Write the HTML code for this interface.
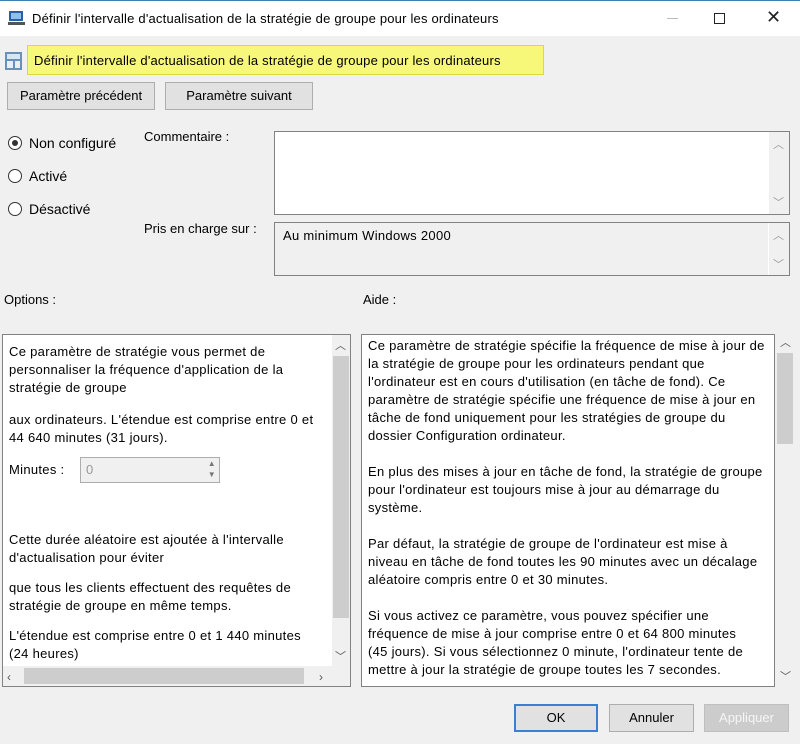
<!DOCTYPE html>
<html><head><meta charset="utf-8"><style>
*{box-sizing:border-box}
body{margin:0;width:800px;height:744px;background:#f0f0f0;font-family:"Liberation Sans",sans-serif;font-size:12.5px;color:#000;position:relative;overflow:hidden}
.a{position:absolute}
.title{left:0;top:0;width:800px;height:36px;background:#fff;border-top:1px solid #3c7fb1}
.btn{position:absolute;background:#e1e1e1;border:1px solid #adadad;text-align:center;line-height:26px;font-size:13px}
.radio{position:absolute;width:14px;height:14px;border:1px solid #333;border-radius:50%;background:#fff}
.box{position:absolute;background:#fff;border:1px solid #828282}
.sb{position:absolute;color:#999;font-size:11px}
.t{font-size:13px;letter-spacing:0.3px}
p{margin:0}
</style></head><body>
<div class="a title">
 <svg class="a" style="left:8px;top:9px" width="18" height="16"><rect x="1" y="1" width="14" height="10" fill="#2a5ea8"/><rect x="3" y="3" width="10" height="6" fill="#8fc0ea"/><rect x="0" y="12" width="17" height="3" fill="#555"/></svg>
 <div class="a" style="left:32px;top:10px;font-size:13px;letter-spacing:0.2px">Définir l'intervalle d'actualisation de la stratégie de groupe pour les ordinateurs</div>
 <div class="a" style="left:667px;top:17px;width:11px;height:1px;background:#bbb"></div>
 <div class="a" style="left:714px;top:12px;width:11px;height:11px;border:1px solid #222"></div>
 <div class="a" style="left:766px;top:6px;font-size:18px;color:#222">✕</div>
</div>
<svg class="a" style="left:5px;top:51px" width="18" height="20"><rect x="0" y="1" width="17" height="18" fill="#6a8fb8"/><rect x="2" y="3" width="13" height="5" fill="#d8e6f3"/><rect x="2" y="10" width="6" height="7" fill="#e8eef5"/><rect x="10" y="10" width="5" height="7" fill="#e8eef5"/></svg>
<div class="a" style="left:27px;top:45px;width:517px;height:30px;background:#f7f77a;border:1px solid #e0d640;padding:7px 0 0 6px;font-size:13px;letter-spacing:0.2px">Définir l'intervalle d'actualisation de la stratégie de groupe pour les ordinateurs</div>
<div class="btn" style="left:7px;top:82px;width:148px;height:28px">Paramètre précédent</div>
<div class="btn" style="left:165px;top:82px;width:148px;height:28px">Paramètre suivant</div>

<div class="radio" style="left:8px;top:136px"><div class="a" style="left:3px;top:3px;width:6px;height:6px;border-radius:50%;background:#333"></div></div>
<div class="a" style="left:29px;top:135px;font-size:14px">Non configuré</div>
<div class="radio" style="left:8px;top:169px"></div>
<div class="a" style="left:29px;top:168px;font-size:14px">Activé</div>
<div class="radio" style="left:8px;top:202px"></div>
<div class="a" style="left:29px;top:201px;font-size:14px">Désactivé</div>

<div class="a" style="left:144px;top:129px;font-size:13px">Commentaire :</div>
<div class="box" style="left:274px;top:131px;width:516px;height:84px"><div class="a" style="right:0;top:0;width:20px;height:82px;background:#f0f0f0"></div><div class="sb" style="right:5px;top:4px">︿</div><div class="sb" style="right:5px;top:62px">﹀</div></div>
<div class="a" style="left:144px;top:221px;font-size:13px">Pris en charge sur :</div>
<div class="box" style="left:274px;top:222px;width:516px;height:54px;background:#f0f0f0"><div class="a" style="left:8px;top:5px;font-size:13px;letter-spacing:0.3px">Au minimum Windows 2000</div><div class="a" style="right:20px;top:0;width:1px;height:52px;background:#fff"></div><div class="sb" style="right:5px;top:4px">︿</div><div class="sb" style="right:5px;top:33px">﹀</div></div>

<div class="a" style="left:4px;top:292px;font-size:13px">Options :</div>
<div class="a" style="left:363px;top:292px;font-size:13px">Aide :</div>

<div class="box t" style="left:2px;top:334px;width:349px;height:353px;line-height:18px">
 <div class="a" style="left:6px;top:8px;width:325px">
  <p>Ce paramètre de stratégie vous permet de<br>personnaliser la fréquence d'application de la<br>stratégie de groupe</p>
  <p style="margin-top:14px">aux ordinateurs. L'étendue est comprise entre 0 et<br>44 640 minutes (31 jours).</p>
  <div style="margin-top:10px;position:relative;height:26px"><span style="position:absolute;top:4px">Minutes :</span><div class="a" style="left:71px;top:0;width:140px;height:26px;border:1px solid #adadad;background:#f0f0f0;color:#999;padding:3px 0 0 5px">0<span class="a" style="right:3px;top:0;font-size:8px;line-height:11px;color:#777">▲<br>▼</span></div></div>
  <p style="margin-top:48px">Cette durée aléatoire est ajoutée à l'intervalle<br>d'actualisation pour éviter</p>
  <p style="margin-top:12px">que tous les clients effectuent des requêtes de<br>stratégie de groupe en même temps.</p>
  <p style="margin-top:12px">L'étendue est comprise entre 0 et 1 440 minutes<br>(24 heures)</p>
 </div>
 <div class="a" style="left:329px;top:0;width:18px;height:331px;background:#f0f0f0"><div class="a" style="left:1px;top:21px;width:16px;height:262px;background:#cdcdcd"></div><div class="sb" style="left:3px;top:2px;color:#555">︿</div><div class="sb" style="left:3px;top:313px;color:#555">﹀</div></div>
 <div class="a" style="left:0;top:331px;width:347px;height:20px;background:#f0f0f0"><div class="a" style="left:21px;top:2px;width:280px;height:16px;background:#cdcdcd"></div><div class="a" style="left:4px;top:2px;color:#555;font-size:12px">‹</div><div class="a" style="left:316px;top:2px;color:#555;font-size:12px">›</div></div>
</div>

<div class="box t" style="left:361px;top:334px;width:414px;height:353px;line-height:18px">
 <div class="a" style="left:6px;top:2px;width:408px;white-space:nowrap">
  <p>Ce paramètre de stratégie spécifie la fréquence de mise à jour de<br>la stratégie de groupe pour les ordinateurs pendant que<br>l'ordinateur est en cours d'utilisation (en tâche de fond). Ce<br>paramètre de stratégie spécifie une fréquence de mise à jour en<br>tâche de fond uniquement pour les stratégies de groupe du<br>dossier Configuration ordinateur.</p>
  <p style="margin-top:18px">En plus des mises à jour en tâche de fond, la stratégie de groupe<br>pour l'ordinateur est toujours mise à jour au démarrage du<br>système.</p>
  <p style="margin-top:18px">Par défaut, la stratégie de groupe de l'ordinateur est mise à<br>niveau en tâche de fond toutes les 90 minutes avec un décalage<br>aléatoire compris entre 0 et 30 minutes.</p>
  <p style="margin-top:18px">Si vous activez ce paramètre, vous pouvez spécifier une<br>fréquence de mise à jour comprise entre 0 et 64 800 minutes<br>(45 jours). Si vous sélectionnez 0 minute, l'ordinateur tente de<br>mettre à jour la stratégie de groupe toutes les 7 secondes.</p>
 </div>
</div>
<div class="a" style="left:777px;top:353px;width:16px;height:91px;background:#cdcdcd"></div>
<div class="sb" style="left:780px;top:334px;color:#555">︿</div>
<div class="sb" style="left:780px;top:668px;color:#555">﹀</div>

<div class="btn" style="left:514px;top:704px;width:84px;height:28px;border:2px solid #3c7fd0;line-height:24px">OK</div>
<div class="btn" style="left:609px;top:704px;width:85px;height:28px">Annuler</div>
<div class="btn" style="left:704px;top:704px;width:85px;height:28px;background:#cccccc;border-color:#bfbfbf;color:#f6f6f6">Appliquer</div>
</body></html>
